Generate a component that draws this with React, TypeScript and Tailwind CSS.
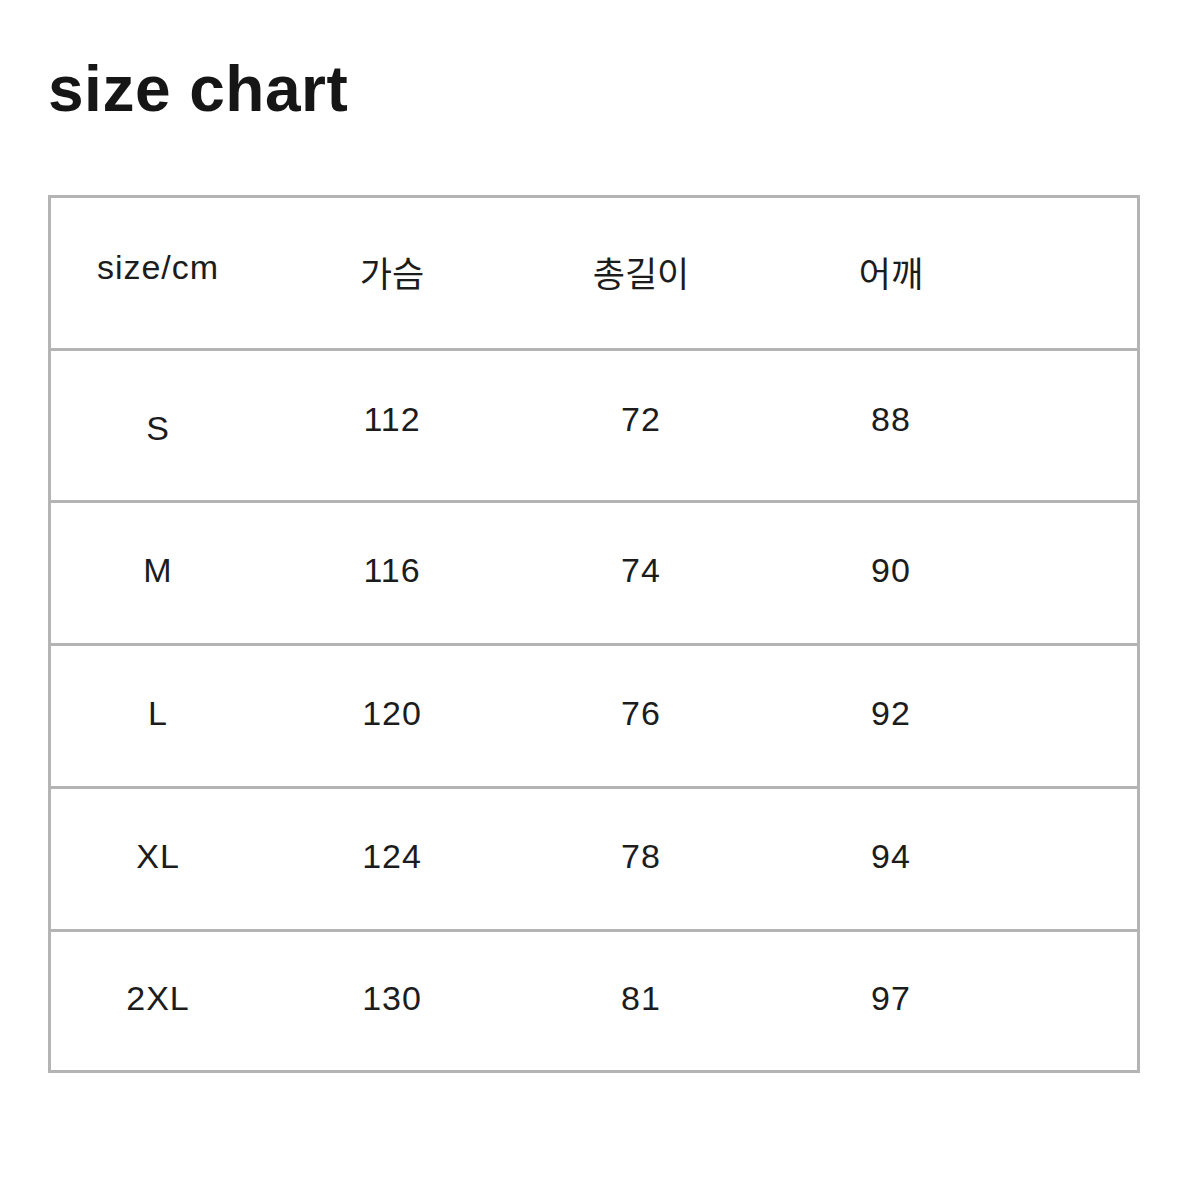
const rows = [
  { size: "S", chest: "112", length: "72", shoulder: "88" },
  { size: "M", chest: "116", length: "74", shoulder: "90" },
  { size: "L", chest: "120", length: "76", shoulder: "92" },
  { size: "XL", chest: "124", length: "78", shoulder: "94" },
  { size: "2XL", chest: "130", length: "81", shoulder: "97" },
];

const cols = "grid grid-cols-[214px_254px_244px_256px_1fr]";

export default function App() {
  return (
    <main
      className="min-h-[1188px] w-[1188px] bg-white px-[48px] pt-[54px] text-[#1c1c1c]"
      style={{ fontFamily: '"Liberation Sans", Arial, "Noto Sans CJK KR", sans-serif' }}
    >
      <h1 className="text-[64px] font-bold leading-[70px] tracking-[0.5px] text-[#161616]">size chart</h1>

      <div className="mt-[71px] w-[1092px] border-[3px] border-[#b4b4b4]">
        <div className={`${cols} h-[150px] items-center pb-[12px] text-[34px] tracking-[1px]`}>
          <div className="text-center">size/cm</div>
          <div className="pt-[10px] text-center font-['Noto_Sans_CJK_KR',sans-serif] text-[35px] tracking-normal">가슴</div>
          <div className="pt-[10px] text-center font-['Noto_Sans_CJK_KR',sans-serif] text-[35px] tracking-normal">총길이</div>
          <div className="pt-[10px] text-center font-['Noto_Sans_CJK_KR',sans-serif] text-[35px] tracking-normal">어깨</div>
          <div />
        </div>

        {rows.map((r, i) => (
          <div
            key={r.size}
            className={`${cols} items-center border-t-[3px] border-[#b4b4b4] text-[34px] tracking-[1px] ${
              i === 0 ? "h-[152px]" : i === 4 ? "h-[141px]" : "h-[143px]"
            }`}
          >
            <div className={`text-center ${i === 0 ? "pt-[6px]" : "pb-[6px]"}`}>{r.size}</div>
            <div className={`text-center ${i === 0 ? "pb-[12px]" : "pb-[6px]"}`}>{r.chest}</div>
            <div className={`text-center ${i === 0 ? "pb-[12px]" : "pb-[6px]"}`}>{r.length}</div>
            <div className={`text-center ${i === 0 ? "pb-[12px]" : "pb-[6px]"}`}>{r.shoulder}</div>
            <div />
          </div>
        ))}
      </div>
    </main>
  );
}
